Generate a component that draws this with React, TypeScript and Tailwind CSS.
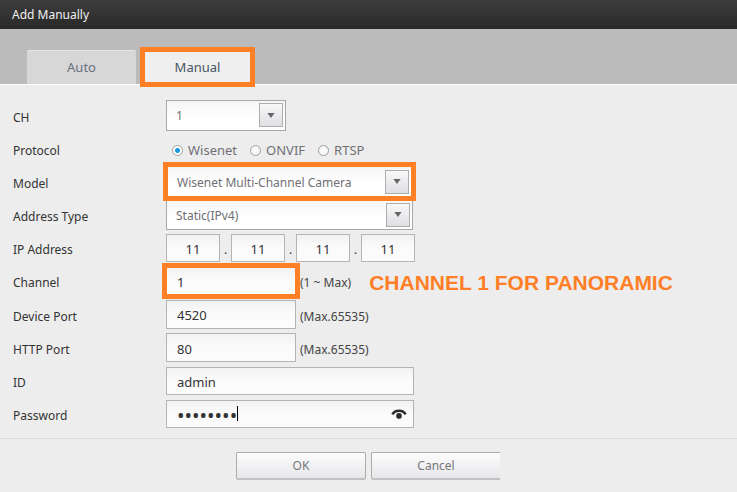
import { useState, type ReactNode } from "react";

const fieldText = "font-['Noto_Sans','Open_Sans',sans-serif] text-[#333]";

function Row({ label, htmlFor, tall, children }: { label: string; htmlFor?: string; tall?: boolean; children: ReactNode }) {
  return (
    <div className={`flex items-center ${tall ? "h-[34px]" : "h-[33px]"}`}>
      {htmlFor ? (
        <label htmlFor={htmlFor} className="w-[153px] shrink-0 pt-[5px] text-[#333]">{label}</label>
      ) : (
        <span className="w-[153px] shrink-0 pt-[5px] text-[#333]">{label}</span>
      )}
      {children}
    </div>
  );
}

function SelectBox({ id, options, className }: { id: string; options: string[]; className: string }) {
  return (
    <div className={`relative flex shrink-0 ${className}`}>
      <select
        id={id}
        className="h-full w-full appearance-none bg-gradient-to-b from-[#f5f5f5] to-white to-60% pt-[2px] pl-[9px] text-[12px] text-[#707074] outline-none"
      >
        {options.map((o) => (
          <option key={o}>{o}</option>
        ))}
      </select>
      <span className="pointer-events-none absolute top-1/2 right-[2px] flex size-6 -translate-y-1/2 items-center justify-center border border-[#adadad] bg-gradient-to-b from-[#f8f8f9] to-[#dfe0e4]">
        <svg viewBox="0 0 8 5" className="h-[5px] w-2" aria-hidden="true">
          <path d="M0.4 0h7.2L4 5z" fill="#666" />
        </svg>
      </span>
    </div>
  );
}

function TextBox({ id, value, className, label }: { id: string; value: string; className: string; label?: string }) {
  return (
    <input
      id={id}
      aria-label={label}
      defaultValue={value}
      className={`shrink-0 bg-gradient-to-b from-[#f2f2f2] to-[#fbfbfb] to-50% pt-[2px] text-[13px] outline-none ${fieldText} ${className}`}
    />
  );
}

export default function App() {
  const [protocol, setProtocol] = useState("Wisenet");

  return (
    <div className="min-h-screen bg-[#ededed] font-['Noto_Sans','Open_Sans',sans-serif] text-[12px] leading-4">
      <header className="flex h-[29px] items-center bg-gradient-to-b from-[#3d3d3d] to-[#292929] pl-3 text-[#f0f0f0]">
        <h1>Add Manually</h1>
      </header>

      <nav className="flex h-14 items-end gap-1 border-b border-white bg-[#bbb] pl-[27px] text-[13px]">
        <button className="h-[34px] w-[109px] rounded-t-xs border-t border-[#e6e6e6] bg-[#d7d7d7] pb-[2px] text-[#66707e]">Auto</button>
        <button className="z-10 -mb-[3px] h-10 w-[115px] border-[5px] border-[#ff7f27] bg-[#efefef] text-[#475564]">Manual</button>
      </nav>

      <form className="pt-[13px] pb-2 pl-[13px]" onSubmit={(e) => e.preventDefault()}>
        <Row label="CH" htmlFor="ch" tall>
          <SelectBox id="ch" options={["1", "2", "3", "4"]} className="h-[31px] w-[120px] border border-[#a8a8a8]" />
        </Row>
        <Row label="Protocol">
          <div className="flex items-center gap-[13px] pt-[3px] pl-[6px]">
            {["Wisenet", "ONVIF", "RTSP"].map((p) => (
              <label key={p} className="flex items-center gap-[5px] text-[13px] text-[#707074]">
                <input
                  type="radio"
                  name="protocol"
                  checked={protocol === p}
                  onChange={() => setProtocol(p)}
                  className="size-[11px] appearance-none rounded-full border border-[#a0a0a0] bg-[#f4f4f4] bg-[radial-gradient(circle,#fff,#eee)] checked:bg-[radial-gradient(circle,#1c97de_2px,#fff_3px)]"
                />
                {p}
              </label>
            ))}
          </div>
        </Row>
        <Row label="Model" htmlFor="model">
          <SelectBox id="model" options={["Wisenet Multi-Channel Camera"]} className="z-10 -ml-[3px] h-[39px] w-[253px] border-[5px] border-[#ff7f27]" />
        </Row>
        <Row label="Address Type" htmlFor="address-type">
          <SelectBox id="address-type" options={["Static(IPv4)"]} className="h-[31px] w-[247px] border border-[#a8a8a8]" />
        </Row>
        <Row label="IP Address">
          {[1, 2, 3, 4].map((n) => (
            <div key={n} className="flex items-center">
              {n > 1 && <span className="w-[11px] pt-[5px] text-center text-[#333]">.</span>}
              <TextBox id={`ip-${n}`} label={`IP address part ${n}`} value="11" className="h-7 w-[54px] border border-[#b4b4b4] text-center" />
            </div>
          ))}
        </Row>
        <Row label="Channel" htmlFor="channel">
          <TextBox id="channel" value="1" className="z-10 -ml-1 h-9 w-[138px] border-[5px] border-[#ff7f27] pl-[10px]" />
          <span className="pt-[5px] text-[#444]">(1 ~ Max)</span>
          <strong className="ml-[18px] pt-[5px] font-['Liberation_Sans',Arial,sans-serif] text-[21px] leading-6 whitespace-nowrap text-[#ff7f27]">CHANNEL 1 FOR PANORAMIC</strong>
        </Row>
        <Row label="Device Port" htmlFor="device-port" tall>
          <TextBox id="device-port" value="4520" className="h-[29px] w-[130px] border border-[#b4b4b4] pl-[10px]" />
          <span className="ml-1 pt-[5px] text-[#444]">(Max.65535)</span>
        </Row>
        <Row label="HTTP Port" htmlFor="http-port">
          <TextBox id="http-port" value="80" className="h-[29px] w-[130px] border border-[#b4b4b4] pl-[10px]" />
          <span className="ml-1 pt-[5px] text-[#444]">(Max.65535)</span>
        </Row>
        <Row label="ID" htmlFor="user-id">
          <TextBox id="user-id" value="admin" className="h-7 w-[248px] border border-[#b4b4b4] pl-[10px]" />
        </Row>
        <Row label="Password" htmlFor="password">
          <div className="flex h-7 w-[248px] items-center border border-[#b4b4b4] bg-gradient-to-b from-[#f2f2f2] to-[#fbfbfb] to-50% pr-[6px] pl-[10px]">
            <div className="relative flex flex-1 items-center">
              <input id="password" type="password" defaultValue="adminadm" className={`h-6 w-full bg-transparent pt-[3px] text-[20px] outline-none ${fieldText}`} />
              <span className="absolute left-[60px] h-[15px] w-px bg-black" />
            </div>
            <button type="button" aria-label="Show password">
              <svg viewBox="0 0 16 10" className="h-[10px] w-4" aria-hidden="true">
                <path d="M1.4 5.4C4 0.6 12 0.6 14.6 5.4" fill="none" stroke="#2b2b2b" strokeWidth="2.6" />
                <circle cx="8" cy="6.9" r="2.8" fill="#2b2b2b" />
              </svg>
            </button>
          </div>
        </Row>
      </form>

      <footer className="flex justify-center gap-[5px] border-t border-[#dcdcdc] pt-[13px] pr-px pb-[11px] text-[#77777b]">
        <button className="h-7 w-[130px] rounded-xs border border-b-2 border-[#acacac] border-b-[#c0c0c0] bg-gradient-to-b from-[#fcfcfc] to-[#e6e7ea]">OK</button>
        <button className="h-7 w-[129px] rounded-l-xs border border-r-0 border-b-2 border-[#acacac] border-b-[#c0c0c0] bg-gradient-to-b from-[#fcfcfc] to-[#e6e7ea]">Cancel</button>
      </footer>
    </div>
  );
}
